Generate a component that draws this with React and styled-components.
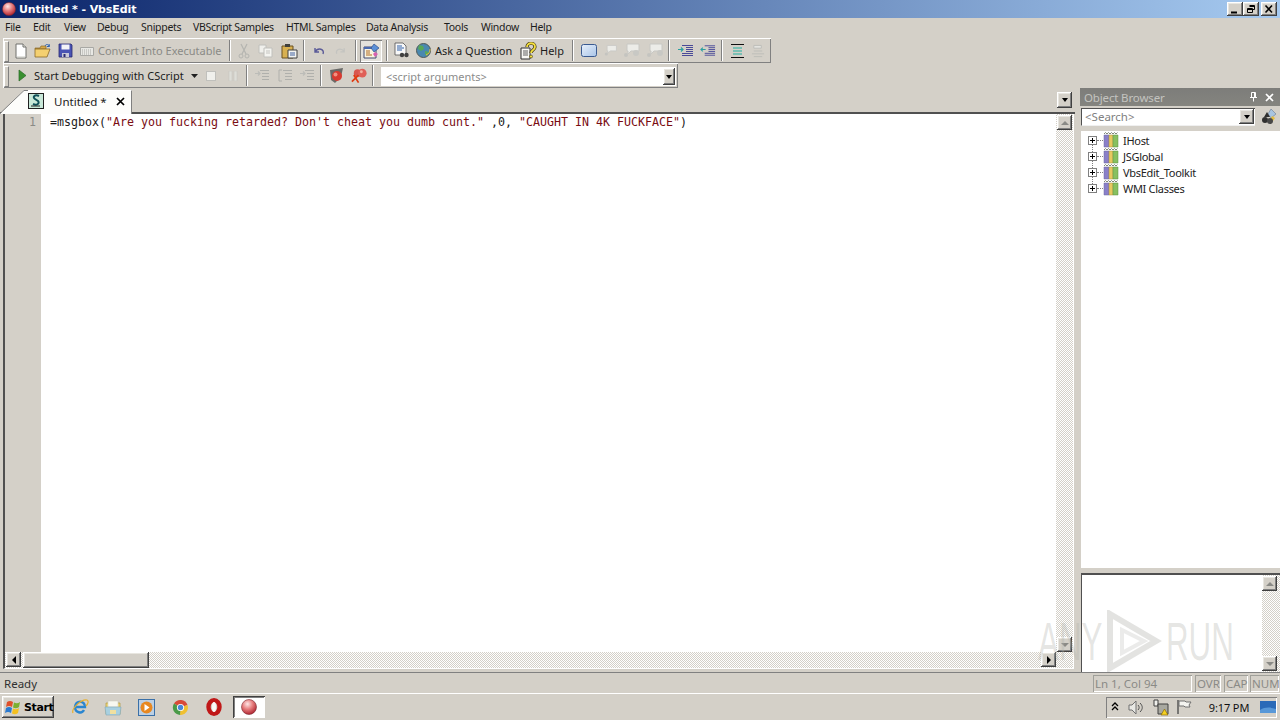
import React from 'react';
import styled, { createGlobalStyle, css } from 'styled-components';

const uiFont = `"Noto Sans", "DejaVu Sans", sans-serif`;

const GlobalStyle = createGlobalStyle`
    html, body {
        margin: 0;
        padding: 0;
        background: #d4d0c8;
    }
    * {
        box-sizing: border-box;
    }
`;

const raised = css`
    background-color: #d4d0c8;
    box-shadow: inset -1px -1px #404040, inset 1px 1px #ffffff, inset -2px -2px #808080, inset 2px 2px #e8e6e0;
`;

const checker = css`
    background: repeating-conic-gradient(#d4d0c8 0 25%, #ffffff 0 50%) 0 0 / 2px 2px;
`;

const Desktop = styled.div`
    position: relative;
    width: 1280px;
    height: 720px;
    display: flex;
    flex-direction: column;
    overflow: hidden;
    background: #d4d0c8;
    font-family: ${uiFont};
    font-size: 11px;
    color: #1c1c1c;
`;

/* title bar */
const TitleBar = styled.div`
    height: 18px;
    flex: none;
    display: flex;
    align-items: center;
    padding: 0 2px;
    background: linear-gradient(90deg, #0a246a 0%, #a6caf0 100%);
`;

const TitleText = styled.span`
    margin-left: 3px;
    font-family: "DejaVu Sans", sans-serif;
    font-weight: 700;
    font-size: 11px;
    letter-spacing: -0.1px;
    color: #ffffff;
`;

const WindowButtons = styled.div`
    margin-left: auto;
    display: flex;
    gap: 0;
    padding-right: 1px;
`;

const WindowButton = styled.div`
    ${raised}
    width: 16px;
    height: 14px;
    margin-left: ${(p) => p.$gap || 0}px;
    display: flex;
    align-items: center;
    justify-content: center;
`;

/* menu */
const MenuBar = styled.div`
    height: 20px;
    flex: none;
    display: flex;
    align-items: center;
    padding: 0 0 2px 5px;
    font-size: 10.5px;
    letter-spacing: -0.3px;
`;

const MenuItem = styled.span`
    width: ${(p) => p.$w}px;
    flex: none;
    white-space: nowrap;
`;

/* toolbars */
const Toolbar = styled.div`
    height: 25px;
    width: ${(p) => p.$w}px;
    margin-left: 3px;
    flex: none;
    display: flex;
    align-items: center;
    box-shadow: inset 1px 1px #ffffff, inset -1px -1px #808080;
`;

const Gripper = styled.div`
    width: 7px;
    height: 19px;
    flex: none;
    position: relative;
    &::before {
        content: "";
        display: block;
        width: 3px;
        height: 19px;
        margin-left: 1px;
        border-left: 1px solid #ffffff;
        border-right: 1px solid #808080;
        border-top: 1px solid #ffffff;
        border-bottom: 1px solid #808080;
    }
`;

const ToolSeparator = styled.div`
    width: 2px;
    height: 21px;
    flex: none;
    border-left: 1px solid #808080;
    border-right: 1px solid #ffffff;
`;

const Gap = styled.div`
    width: ${(p) => p.$w}px;
    flex: none;
`;

const ToolButton = styled.div`
    width: ${(p) => p.$w}px;
    height: 22px;
    flex: none;
    display: flex;
    align-items: center;
    justify-content: ${(p) => (p.$text ? 'flex-start' : 'center')};
    padding-left: ${(p) => p.$pad || 0}px;
    gap: ${(p) => p.$gapX || 0}px;
    white-space: nowrap;
    color: ${(p) => (p.$off ? '#8a8a86' : 'inherit')};
    ${(p) => p.$pressed && css`
        background: #e4e2dc;
        box-shadow: inset 1px 1px #808080, inset -1px -1px #ffffff;
    `}
`;

const ArgsCombo = styled.div`
    width: 295px;
    height: 19px;
    margin: 2px 0 0 7px;
    flex: none;
    display: flex;
    align-items: center;
    justify-content: space-between;
    padding: 0 1px 0 5px;
    background: #ffffff;
    color: #8c8c8c;
`;

const SmallDrop = styled.div`
    ${raised}
    width: ${(p) => p.$w || 12}px;
    height: ${(p) => p.$h || 16}px;
    margin-bottom: ${(p) => p.$below || 0}px;
    flex: none;
    display: flex;
    align-items: center;
    justify-content: center;
    &::after {
        content: "";
        border-left: 3px solid transparent;
        border-right: 3px solid transparent;
        border-top: 4px solid #000000;
    }
`;

/* workspace */
const Workspace = styled.div`
    flex: 1;
    min-height: 0;
    display: flex;
`;

const DocPane = styled.div`
    width: 1075px;
    flex: none;
    display: flex;
    flex-direction: column;
    padding-bottom: 3px;
`;

const TabStrip = styled.div`
    height: 26px;
    flex: none;
    display: flex;
    align-items: flex-end;
    justify-content: space-between;
    padding-right: 3px;
    box-shadow: inset 0 -2px #505050;
`;

const TabSlope = styled.svg`
    display: block;
    flex: none;
`;

const Tab = styled.div`
    height: 24px;
    width: 104px;
    flex: none;
    display: flex;
    align-items: center;
    background: #fdfdfb;
    border-top: 1px solid #ffffff;
    border-right: 1px solid #808080;
    font-size: 11.5px;
    color: #202020;
    padding-bottom: 3px;
`;

const TabLabel = styled.span`
    margin-left: 10px;
    width: 62px;
    white-space: nowrap;
`;

const TabWrap = styled.div`
    display: flex;
    align-items: flex-end;
`;

const EditorFrame = styled.div`
    flex: 1;
    min-height: 0;
    margin-left: 3px;
    margin-right: 1px;
    display: grid;
    grid-template-columns: 1fr 17px;
    grid-template-rows: 1fr 16px;
    border-left: 2px solid #505050;
    border-right: 1px solid #ffffff;
    border-bottom: 1px solid #ffffff;
    ${checker}
`;

const CodeArea = styled.div`
    display: flex;
    min-height: 0;
    background: #ffffff;
`;

const Gutter = styled.div`
    width: 36px;
    flex: none;
    padding: 1px 5px 0 0;
    text-align: right;
    background: #d4d0c8;
    font-family: "DejaVu Sans Mono", monospace;
    font-size: 11.6px;
    line-height: 14px;
    color: #8a8a86;
`;

const Code = styled.pre`
    margin: 0;
    padding: 1px 0 0 9px;
    font-family: "DejaVu Sans Mono", monospace;
    font-size: 11.63px;
    line-height: 14px;
    color: #202020;
`;

const Str = styled.span`
    color: #7a0c12;
`;

const ScrollColumn = styled.div`
    display: flex;
    flex-direction: column;
    justify-content: space-between;
    align-items: flex-start;
    padding: ${(p) => p.$padding || '1px 0 0 1px'};
    min-height: 0;
    ${checker}
`;

const HScroll = styled.div`
    display: flex;
    align-items: stretch;
    padding-left: 1px;
    ${checker}
`;

const ScrollButton = styled.div`
    ${raised}
    width: ${(p) => p.$w || 15}px;
    height: ${(p) => p.$h || 15}px;
    flex: none;
    display: flex;
    align-items: center;
    justify-content: center;
    &::after {
        content: "";
        width: 0;
        height: 0;
        ${(p) => p.$dir === 'up' && css`
            border-left: 4px solid transparent;
            border-right: 4px solid transparent;
            border-bottom: 4px solid ${p.$off ? '#8a8a86' : '#000000'};
        `}
        ${(p) => p.$dir === 'down' && css`
            border-left: 4px solid transparent;
            border-right: 4px solid transparent;
            border-top: 4px solid ${p.$off ? '#8a8a86' : '#000000'};
        `}
        ${(p) => p.$dir === 'left' && css`
            border-top: 4px solid transparent;
            border-bottom: 4px solid transparent;
            border-right: 4px solid #000000;
        `}
        ${(p) => p.$dir === 'right' && css`
            border-top: 4px solid transparent;
            border-bottom: 4px solid transparent;
            border-left: 4px solid #000000;
        `}
    }
`;

const ScrollThumb = styled.div`
    ${raised}
    width: 126px;
    margin-left: 2px;
    flex: none;
`;

const TrackFill = styled.div`
    flex: 1;
`;

/* object browser */
const BrowserPanel = styled.div`
    width: 200px;
    margin-left: 5px;
    flex: none;
    display: flex;
    flex-direction: column;
`;

const PanelHeader = styled.div`
    height: 18px;
    flex: none;
    display: flex;
    align-items: center;
    padding: 0 6px 0 4px;
    background: linear-gradient(180deg, #7d7d7a, #84847f);
    color: #c4c4c0;
    font-size: 11.5px;
    letter-spacing: -0.15px;
`;

const HeaderIcons = styled.div`
    margin-left: auto;
    display: flex;
    align-items: center;
    gap: 7px;
`;

const SearchRow = styled.div`
    height: 21px;
    flex: none;
    display: flex;
    align-items: center;
    padding-left: 1px;
`;

const SearchCombo = styled.div`
    width: 174px;
    height: 18px;
    flex: none;
    display: flex;
    align-items: center;
    justify-content: space-between;
    padding: 0 1px 0 3px;
    background: #ffffff;
    border-top: 1px solid #505050;
    border-left: 1px solid #505050;
    border-bottom: 1px solid #f0f0f0;
    color: #808080;
    font-size: 11.5px;
`;

const SearchAction = styled.div`
    margin-left: 6px;
    display: flex;
`;

const Tree = styled.div`
    flex: 1;
    min-height: 0;
    margin: 4px 0 5px 1px;
    padding-top: 1px;
    position: relative;
    background: #ffffff;
`;

const TreeRow = styled.div`
    height: 16px;
    display: flex;
    align-items: center;
    padding-left: 7px;
    color: #222222;
    white-space: nowrap;
`;

const Expander = styled.span`
    width: 9px;
    height: 9px;
    flex: none;
    position: relative;
    background: #ffffff;
    border: 1px solid #808080;
    &::before {
        content: "";
        position: absolute;
        left: 1px;
        top: 3px;
        width: 5px;
        height: 1px;
        background: #000000;
    }
    &::after {
        content: "";
        position: absolute;
        left: 3px;
        top: 1px;
        width: 1px;
        height: 5px;
        background: #000000;
    }
`;

const TreeDots = styled.span`
    width: 6px;
    flex: none;
    border-top: 1px dotted #808080;
`;

const TreeLabel = styled.span`
    margin-left: 4px;
    font-size: 11px;
    letter-spacing: -0.3px;
`;

const TreeGuide = styled.div`
    position: absolute;
    left: 11px;
    top: 9px;
    height: 48px;
    border-left: 1px dotted #808080;
`;

const DetailBox = styled.div`
    height: 99px;
    flex: none;
    margin-left: 1px;
    display: grid;
    grid-template-columns: 1fr 18px;
    background: #ffffff;
    border-top: 2px solid #505050;
    border-left: 1px solid #505050;
`;

const DetailText = styled.div`
    background: #ffffff;
`;

/* status bar */
const StatusBar = styled.div`
    height: 21px;
    flex: none;
    display: flex;
    align-items: center;
    padding: 2px 1px 0 4px;
    box-shadow: inset 0 1px #808080;
    font-size: 11.5px;
    color: #303030;
`;

const StatusSpacer = styled.div`
    flex: 1;
`;

const StatusCell = styled.div`
    width: ${(p) => p.$w}px;
    margin-left: ${(p) => p.$gap || 0}px;
    height: 17px;
    flex: none;
    display: flex;
    align-items: center;
    padding-left: 2px;
    color: #8a8a86;
    box-shadow: inset 1px 1px #a0a09a, inset -1px -1px #ffffff;
    white-space: nowrap;
    overflow: hidden;
`;

/* taskbar */
const Taskbar = styled.div`
    height: 27px;
    flex: none;
    display: flex;
    align-items: center;
    padding: 1px 3px 0 2px;
    box-shadow: inset 0 1px #ffffff;
`;

const StartButton = styled.div`
    ${raised}
    width: 52px;
    height: 22px;
    flex: none;
    display: flex;
    align-items: center;
    padding-left: 3px;
    gap: 1px;
    font-family: "DejaVu Sans", sans-serif;
    font-weight: 700;
    font-size: 11px;
    letter-spacing: -0.4px;
    color: #000000;
`;

const TaskSlot = styled.div`
    width: ${(p) => p.$w || 33.5}px;
    height: 22px;
    flex: none;
    display: flex;
    align-items: center;
    justify-content: center;
`;

const ActiveTask = styled.div`
    width: 32px;
    height: 22px;
    margin-left: 2.5px;
    flex: none;
    display: flex;
    align-items: center;
    justify-content: center;
    background: #ffffff;
    box-shadow: inset 1px 1px #404040, inset -1px -1px #ffffff, inset 2px 2px #808080;
`;

const Tray = styled.div`
    margin-left: auto;
    width: 171px;
    height: 21px;
    flex: none;
    display: flex;
    align-items: center;
    box-shadow: inset 1px 1px #808080, inset -1px -1px #ffffff;
`;

const TrayClock = styled.span`
    width: 50px;
    margin-left: 10px;
    text-align: center;
    font-size: 11px;
    letter-spacing: -0.1px;
    color: #111111;
    white-space: nowrap;
`;

/* watermark */
const Watermark = styled.div`
    position: absolute;
    left: 1038px;
    top: 610px;
    width: 190px;
    height: 62px;
    display: flex;
    align-items: center;
    justify-content: space-between;
    pointer-events: none;
    font-family: "Liberation Sans", sans-serif;
    font-size: 54px;
    color: rgba(176, 176, 170, 0.32);
`;

const MarkWord = styled.span`
    display: inline-block;
    width: 62px;
    transform: scaleX(0.58);
    transform-origin: left center;
    white-space: nowrap;
`;

/* drawings */
const Ball = ({ id, size = 14 }) => (
    <svg width={size} height={size} viewBox="0 0 16 16">
        <defs>
            <radialGradient id={id} cx="0.4" cy="0.3" r="0.75">
                <stop offset="0" stopColor="#fde6e6" />
                <stop offset="0.45" stopColor="#e88080" />
                <stop offset="1" stopColor="#a81c28" />
            </radialGradient>
        </defs>
        <circle cx="8" cy="8" r="7.5" fill={`url(#${id})`} stroke="#7a2a30" strokeWidth="0.6" />
    </svg>
);

const NewDocIcon = () => (
    <svg width="14" height="16" viewBox="0 0 14 16">
        <path d="M2 1h7l3 3v11H2z" fill="#ffffff" stroke="#70706c" />
        <path d="M9 1v3h3" fill="#e8e8e0" stroke="#70706c" />
        <path d="M3 14h8" stroke="#c8c8c0" />
    </svg>
);

const OpenIcon = () => (
    <svg width="18" height="16" viewBox="0 0 18 16">
        <path d="M1 5h5l1-2h5v3H1z" fill="#d8a848" stroke="#8a6a28" strokeWidth="0.7" />
        <path d="M1 14V6h10l5 0-3 8z" fill="#f4d070" stroke="#8a6a28" strokeWidth="0.8" />
        <path d="M11 3c1-2 3-2 4 0M15 1l.5 2.5L13 3.500" fill="none" stroke="#2a60b0" strokeWidth="1" />
    </svg>
);

const SaveIcon = () => (
    <svg width="15" height="15" viewBox="0 0 15 15">
        <path d="M1 1h12l1 1v12H1z" fill="#4a54b4" stroke="#2a2a70" strokeWidth="0.8" />
        <path d="M3.500 1.500h8v5h-8z" fill="#f4f4f8" />
        <path d="M4 10h7v4H4z" fill="#c8c8d8" />
        <path d="M5.500 11h2v3h-2z" fill="#2a2a70" />
    </svg>
);

const KeyboardIcon = () => (
    <svg width="14" height="12" viewBox="0 0 14 12">
        <path d="M.5 2.500h13v8H.5z" fill="#e8e8e4" stroke="#a8a8a4" />
        <path d="M2 5h10M2 7h10M2 9h10" stroke="#a8a8a4" strokeDasharray="1 1" />
    </svg>
);

const CutIcon = () => (
    <svg width="12" height="16" viewBox="0 0 12 16">
        <path d="M3 1l5 10M9 1L4 11" stroke="#b4b4b0" strokeWidth="1.2" fill="none" />
        <circle cx="3" cy="13" r="2" fill="none" stroke="#b4b4b0" />
        <circle cx="9" cy="13" r="2" fill="none" stroke="#b4b4b0" />
    </svg>
);

const CopyIcon = () => (
    <svg width="16" height="14" viewBox="0 0 16 14">
        <path d="M1 1h7v8H1z" fill="#f0f0ec" stroke="#c0c0bc" />
        <path d="M6 4h8v9H6z" fill="#f4f4f0" stroke="#c0c0bc" />
        <path d="M8 7h4M8 9h4" stroke="#c4c4c0" />
    </svg>
);

const PasteIcon = () => (
    <svg width="17" height="16" viewBox="0 0 17 16">
        <path d="M1 3h11v12H1z" fill="#d8b050" stroke="#6a5020" />
        <path d="M4 1h5v3H4z" fill="#40403c" />
        <path d="M7 7h9v8H7z" fill="#f4f4f0" stroke="#404040" />
        <path d="M9 10h5M9 12h5" stroke="#4060a0" />
    </svg>
);

const UndoIcon = ({ off }) => (
    <svg width="15" height="12" viewBox="0 0 15 12">
        <path
            d={off ? 'M4 9c-2-5 5-7 8-2M12 3v4H8' : 'M11 9c2-5-5-7-8-2M3 3v4h4'}
            fill="none"
            stroke={off ? '#c4c4c0' : '#5a5a98'}
            strokeWidth="1.4"
        />
    </svg>
);

const ToggleIcon = () => (
    <svg width="17" height="16" viewBox="0 0 17 16">
        <path d="M1 4h12v11H1z" fill="#f8f4e0" stroke="#404870" />
        <path d="M1 4h12v2H1z" fill="#4a6ab0" />
        <path d="M3 8h4M3 10h4M3 12h6" stroke="#b06a20" />
        <path d="M11 1l5 4-5 4-3-4z" fill="#5a90d8" stroke="#30508a" strokeWidth="0.7" />
        <path d="M12 9l3 2-3 3-2-3z" fill="#d860b0" />
    </svg>
);

const FindDocIcon = () => (
    <svg width="17" height="17" viewBox="0 0 17 17">
        <path d="M2 1h8l3 3v9H2z" fill="#f8f8f8" stroke="#505050" strokeWidth="0.8" />
        <path d="M4 4h5M4 6h7M4 8h5" stroke="#3060a8" />
        <circle cx="9" cy="13" r="2.200" fill="#404040" />
        <circle cx="13.500" cy="13" r="2.200" fill="#404040" />
    </svg>
);

const GlobeIcon = () => (
    <svg width="17" height="17" viewBox="0 0 17 17">
        <circle cx="8.500" cy="8.500" r="7" fill="#4a88b0" stroke="#505858" />
        <path d="M4 3l4 1 1 3-3 2-3-2zM10 9l4 1-2 4-2-2z" fill="#58a858" />
        <path d="M11 13a6 6 0 0 0 4-6" stroke="#e8c040" fill="none" />
    </svg>
);

const HelpIcon = () => (
    <svg width="17" height="18" viewBox="0 0 17 18">
        <path d="M1 6h9v11H1z" fill="#f8f8f4" stroke="#303030" />
        <path d="M3 9h5M3 11h5M3 13h5" stroke="#606060" />
        <path d="M7 5c0-5 8-5 8 0 0 3-4 3-4 6" fill="none" stroke="#3a3010" strokeWidth="3.200" />
        <path d="M7 5c0-5 8-5 8 0 0 3-4 3-4 6" fill="none" stroke="#f4e040" strokeWidth="1.800" />
        <circle cx="11" cy="14.500" r="1.500" fill="#f4e040" stroke="#3a3010" strokeWidth="0.6" />
    </svg>
);

const RectIcon = () => (
    <svg width="16" height="13" viewBox="0 0 16 13">
        <defs>
            <linearGradient id="rectFill" x1="0" y1="0" x2="1" y2="1">
                <stop offset="0" stopColor="#e8f0fa" />
                <stop offset="1" stopColor="#a8c4e8" />
            </linearGradient>
        </defs>
        <rect x="0.500" y="0.500" width="15" height="12" rx="2" fill="url(#rectFill)" stroke="#3a5a90" />
    </svg>
);

const BubbleIcon = ({ variant }) => (
    <svg width="18" height="15" viewBox="0 0 18 15">
        <path d="M4 1h12v7H8l-3 3V8H4z" fill="#ececE8" stroke="#c8c8c4" />
        {variant > 0 && <circle cx={variant === 1 ? 13 : 14} cy="10" r="3" fill="#c8c8c4" />}
        <circle cx="3" cy="12" r="2" fill="#c4c4c0" />
    </svg>
);

const IndentIcon = ({ flip }) => (
    <svg width="17" height="13" viewBox="0 0 17 13">
        <path d="M5 1.500h11M9 3.500h7M9 5.500h7M9 7.500h7M5 9.500h11M5 11.500h11" stroke="#4a4a98" />
        <path d={flip ? 'M6 5.500H1M3 3.500l-2 2 2 2' : 'M1 5.500h5M4 3.500l2 2-2 2'} fill="none" stroke="#2aa0a0" strokeWidth="1.200" />
    </svg>
);

const LinesIcon = ({ off }) => (
    <svg width="15" height="16" viewBox="0 0 15 16">
        {off ? (
            <path d="M3 2h8v3H3zM3 8h9M1 11h13M3 14h9" fill="#e4e4e0" stroke="#bcbcb8" />
        ) : (
            <>
                <path d="M1 1.500h13M1 14.500h13" stroke="#101010" />
                <path d="M3 5h9M3 8h9M3 11h9" stroke="#20b0a0" />
            </>
        )}
    </svg>
);

const PlayIcon = () => (
    <svg width="9" height="13" viewBox="0 0 9 13">
        <path d="M1 1l7 5.500L1 12z" fill="#3a9030" stroke="#2a6a28" strokeWidth="0.7" />
    </svg>
);

const StopIcon = () => (
    <svg width="10" height="10" viewBox="0 0 10 10">
        <rect x="0.500" y="0.500" width="9" height="9" fill="#f0f0ec" stroke="#c0c0bc" />
    </svg>
);

const PauseIcon = () => (
    <svg width="10" height="10" viewBox="0 0 10 10">
        <path d="M1 0h3v10H1zM6 0h3v10H6z" fill="#deded8" stroke="#c0c0bc" strokeWidth="0.500" />
    </svg>
);

const StepIcon = ({ mode }) => (
    <svg width="17" height="15" viewBox="0 0 17 15">
        <path d="M6 2.500h9M8 5.500h7M8 8.500h7M8 11.500h7" stroke="#b0b0ac" />
        {mode === 1 && <path d="M5 2H2v11h3" fill="none" stroke="#b0b0ac" />}
        {mode !== 1 && <path d="M1 5.500h5M4 3.500l2 2-2 2" fill="none" stroke="#bcbcb8" strokeWidth="1.200" />}
    </svg>
);

const BreakpointIcon = () => (
    <svg width="17" height="17" viewBox="0 0 17 17">
        <path d="M2 3l13-2-2 9-6 6-4-3z" fill="#6a6a68" />
        <circle cx="9" cy="9" r="5" fill="#d83a30" />
        <circle cx="7.500" cy="7.500" r="2" fill="#f09080" />
    </svg>
);

const ClearBreakIcon = () => (
    <svg width="19" height="17" viewBox="0 0 19 17">
        <circle cx="8" cy="6" r="4" fill="#d85850" />
        <circle cx="13" cy="6" r="4.500" fill="#e06058" />
        <circle cx="12" cy="4.500" r="1.500" fill="#f4b0a0" />
        <path d="M2 15l7-7M4 8l5 8" stroke="#e03a10" strokeWidth="1.800" />
    </svg>
);

const BinocularIcon = () => (
    <svg width="16" height="17" viewBox="0 0 16 17">
        <path d="M10 1l5 5-5 4-3-4z" fill="#a8c4e0" stroke="#6a7a90" strokeWidth="0.6" />
        <path d="M11 8l3 2-2 3-2-3z" fill="#e8c040" />
        <circle cx="4" cy="12" r="3" fill="#303030" />
        <circle cx="9" cy="13" r="3" fill="#484848" />
        <path d="M3 9l3-5 3 5z" fill="#303030" />
    </svg>
);

const ScriptTabIcon = () => (
    <svg width="16" height="16" viewBox="0 0 16 16">
        <rect x="0.500" y="0.500" width="15" height="15" fill="#c8e8d8" stroke="#202020" />
        <path d="M11 3c-4-2-7 1-4 3l3 2c2 2-1 5-5 3" fill="none" stroke="#105058" strokeWidth="2" />
        <path d="M3 13h9" stroke="#202020" />
    </svg>
);

const BooksIcon = () => (
    <svg width="16" height="16" viewBox="0 0 16 16">
        <path d="M1 3h5v12H1z" fill="#8a80c8" stroke="#6a68a0" strokeWidth="0.5" />
        <path d="M6 3h4v12H6z" fill="#e8c860" stroke="#a89040" strokeWidth="0.5" />
        <path d="M10 3h5v12h-5z" fill="#88c060" stroke="#5a9040" strokeWidth="0.5" />
        <path d="M1 2l1.500-1.500L4 2l1.500-1.500L7 2l1.500-1.500L10 2l1.500-1.500L13 2l1.500-1.500" fill="none" stroke="#808878" />
    </svg>
);

const WinGlyph = ({ kind }) => (
    <svg width="10" height="10" viewBox="0 0 10 10">
        {kind === 'min' && <path d="M1 7.500h6v2H1z" fill="#000000" />}
        {kind === 'restore' && <path d="M3.500 1.500h5v4h-2M1.500 4.500h5v4h-5zM1.500 5.500h5M3.500 2.500h5" fill="none" stroke="#000000" />}
        {kind === 'close' && <path d="M1.500 1.500l6.500 7M8 1.500l-6.500 7" stroke="#000000" strokeWidth="1.600" />}
    </svg>
);

const CloseGlyph = ({ color = '#000000' }) => (
    <svg width="9" height="9" viewBox="0 0 9 9">
        <path d="M1 1l7 7M8 1L1 8" stroke={color} strokeWidth="1.700" />
    </svg>
);

const PinGlyph = () => (
    <svg width="9" height="10" viewBox="0 0 9 10">
        <path d="M2.500 .5h4v5h-4zM1 5.500h7M4.500 5.500v4M5.500 1v4" fill="none" stroke="#ffffff" />
    </svg>
);

const WindowsFlag = () => (
    <svg width="18" height="16" viewBox="0 0 18 16">
        <path d="M2 3c2-1.500 4-1.500 6 0l-1 5c-2-1.500-4-1.500-6 0z" fill="#e0502a" />
        <path d="M9 3.500c2 1 4 1 6-.5l-1 5c-2 1.500-4 1.500-6 .5z" fill="#7cb030" />
        <path d="M1 9c2-1.500 4-1.500 6 0l-1 5c-2-1.500-4-1.500-6 0z" fill="#2a7ad0" />
        <path d="M8 9.500c2 1 4 1 6-.5l-1 5c-2 1.500-4 1.500-6 .5z" fill="#f4c020" />
    </svg>
);

const IeIcon = () => (
    <svg width="18" height="18" viewBox="0 0 18 18">
        <path d="M4 9h10c0-7-9-7-10 0 0 6 7 7 9 3" fill="none" stroke="#2a86d0" strokeWidth="2.400" />
        <path d="M2 15C0 11 10 1 16 2c2 1 1 4-1 6" fill="none" stroke="#e8b030" strokeWidth="1.200" />
    </svg>
);

const FolderIcon = () => (
    <svg width="18" height="17" viewBox="0 0 18 17">
        <path d="M2 4h14v11H2z" fill="#f0d878" stroke="#b09840" strokeWidth="0.7" />
        <path d="M4 2h10v6H4z" fill="#f8f8f0" stroke="#c8c8b8" strokeWidth="0.5" />
        <path d="M1 8h16l-1 8H2z" fill="#a8d0e0" stroke="#80a8b8" strokeWidth="0.6" />
        <path d="M6 11h6v4H6z" fill="#f0e0a0" />
    </svg>
);

const MediaIcon = () => (
    <svg width="17" height="17" viewBox="0 0 17 17">
        <rect x="0.500" y="0.500" width="16" height="16" fill="#bcd0e4" stroke="#3a70a8" />
        <circle cx="8.500" cy="8.500" r="6" fill="#e88820" />
        <path d="M6.500 5l5 3.500-5 3.500z" fill="#ffffff" />
    </svg>
);

const ChromeIcon = () => (
    <svg width="17" height="17" viewBox="0 0 17 17">
        <path d="M8.500 8.500L2 4.500A7.500 7.500 0 0 1 15.500 6z" fill="#d84a38" />
        <path d="M8.500 8.500L15.500 6A7.500 7.500 0 0 1 8 16z" fill="#f0c030" />
        <path d="M8.500 8.500L8 16A7.500 7.500 0 0 1 2 4.500z" fill="#4a9a48" />
        <circle cx="8.500" cy="8.500" r="3.600" fill="#ffffff" />
        <circle cx="8.500" cy="8.500" r="2.700" fill="#4a88d8" />
    </svg>
);

const OperaIcon = () => (
    <svg width="16" height="18" viewBox="0 0 16 18">
        <ellipse cx="8" cy="9" rx="5.500" ry="6.800" fill="none" stroke="#c01818" strokeWidth="4.400" />
        <ellipse cx="8" cy="9" rx="2" ry="5" fill="#fbfbf8" />
    </svg>
);

const TrayChevron = () => (
    <svg width="8" height="10" viewBox="0 0 8 10">
        <path d="M1 4l3-3 3 3M1 8l3-3 3 3" fill="none" stroke="#000000" strokeWidth="1.300" />
    </svg>
);

const SpeakerIcon = () => (
    <svg width="17" height="15" viewBox="0 0 17 15">
        <path d="M1 5h3l4-4v13l-4-4H1z" fill="#e8e8e4" stroke="#707070" />
        <path d="M10 5c1.500 1.500 1.500 3.500 0 5M12 3c3 3 3 6 0 9" fill="none" stroke="#505050" />
    </svg>
);

const NetworkIcon = () => (
    <svg width="17" height="17" viewBox="0 0 17 17">
        <path d="M1 1h4v6H1z" fill="#f0f0ec" stroke="#404040" />
        <path d="M5 5h10v10H5z" fill="#a8a8a0" stroke="#404040" />
        <path d="M8 16l3.500-6 3.500 6z" fill="#f4d020" stroke="#806000" strokeWidth="0.6" />
    </svg>
);

const FlagIcon = () => (
    <svg width="16" height="16" viewBox="0 0 16 16">
        <path d="M2 1v14" stroke="#505050" strokeWidth="1.400" />
        <path d="M3 2h6l1 1h5l-2 3 1 2H9L8 7H3z" fill="#f4f4f0" stroke="#707070" />
    </svg>
);

const ShowDesktopIcon = () => (
    <svg width="16" height="12" viewBox="0 0 16 12">
        <rect width="16" height="12" fill="#2a6ab8" />
        <path d="M0 9c5-3 10-3 16-1v4H0z" fill="#5898d8" />
    </svg>
);

const SmallArrow = () => (
    <svg width="7" height="4" viewBox="0 0 7 4">
        <path d="M0 0h7L3.500 4z" fill="#202020" />
    </svg>
);

const menuItems = [
    ['File', 28], ['Edit', 31], ['View', 33], ['Debug', 44], ['Snippets', 52], ['VBScript Samples', 93],
    ['HTML Samples', 80], ['Data Analysis', 78], ['Tools', 37], ['Window', 49], ['Help', 30],
];

const treeItems = ['IHost', 'JSGlobal', 'VbsEdit_Toolkit', 'WMI Classes'];

const VScroll = ({ padding }) => (
    <ScrollColumn $padding={padding}>
        <ScrollButton $dir="up" $off />
        <ScrollButton $dir="down" $off />
    </ScrollColumn>
);

export default function App() {
    return (
        <Desktop>
            <GlobalStyle />
            <TitleBar>
                <Ball id="titleBall" />
                <TitleText>Untitled * - VbsEdit</TitleText>
                <WindowButtons>
                    <WindowButton><WinGlyph kind="min" /></WindowButton>
                    <WindowButton><WinGlyph kind="restore" /></WindowButton>
                    <WindowButton $gap={2}><WinGlyph kind="close" /></WindowButton>
                </WindowButtons>
            </TitleBar>

            <MenuBar>
                {menuItems.map(([label, w]) => (
                    <MenuItem key={label} $w={w}>{label}</MenuItem>
                ))}
            </MenuBar>

            <Toolbar $w={768}>
                <Gripper />
                <ToolButton $w={22}><NewDocIcon /></ToolButton>
                <ToolButton $w={22}><OpenIcon /></ToolButton>
                <ToolButton $w={22}><SaveIcon /></ToolButton>
                <ToolButton $w={153} $text $off $pad={4} $gapX={4}><KeyboardIcon />Convert Into Executable</ToolButton>
                <ToolSeparator />
                <ToolButton $w={26}><CutIcon /></ToolButton>
                <ToolButton $w={18}><CopyIcon /></ToolButton>
                <ToolButton $w={28}><PasteIcon /></ToolButton>
                <ToolSeparator />
                <ToolButton $w={28}><UndoIcon /></ToolButton>
                <ToolButton $w={14}><UndoIcon off /></ToolButton>
                <Gap $w={8} />
                <ToolSeparator />
                <Gap $w={3} />
                <ToolButton $w={22} $pressed><ToggleIcon /></ToolButton>
                <Gap $w={4} />
                <ToolSeparator />
                <ToolButton $w={26}><FindDocIcon /></ToolButton>
                <ToolButton $w={102} $text $pad={1} $gapX={3}><GlobeIcon />Ask a Question</ToolButton>
                <ToolButton $w={56} $text $pad={4} $gapX={3}><HelpIcon />Help</ToolButton>
                <ToolSeparator />
                <ToolButton $w={30}><RectIcon /></ToolButton>
                <ToolButton $w={14}><BubbleIcon variant={0} /></ToolButton>
                <ToolButton $w={28}><BubbleIcon variant={1} /></ToolButton>
                <ToolButton $w={18}><BubbleIcon variant={2} /></ToolButton>
                <Gap $w={4} />
                <ToolSeparator />
                <ToolButton $w={30}><IndentIcon /></ToolButton>
                <ToolButton $w={16}><IndentIcon flip /></ToolButton>
                <Gap $w={5} />
                <ToolSeparator />
                <ToolButton $w={28}><LinesIcon /></ToolButton>
                <ToolButton $w={14}><LinesIcon off /></ToolButton>
            </Toolbar>

            <Toolbar $w={675}>
                <Gripper />
                <ToolButton $w={24}><PlayIcon /></ToolButton>
                <ToolButton $w={155} $text>Start Debugging with CScript</ToolButton>
                <ToolButton $w={11}><SmallArrow /></ToolButton>
                <ToolButton $w={22}><StopIcon /></ToolButton>
                <ToolButton $w={22}><PauseIcon /></ToolButton>
                <Gap $w={2} />
                <ToolSeparator />
                <ToolButton $w={28}><StepIcon mode={0} /></ToolButton>
                <ToolButton $w={18}><StepIcon mode={1} /></ToolButton>
                <ToolButton $w={26}><StepIcon mode={2} /></ToolButton>
                <ToolSeparator />
                <ToolButton $w={28}><BreakpointIcon /></ToolButton>
                <ToolButton $w={18}><ClearBreakIcon /></ToolButton>
                <Gap $w={4} />
                <ToolSeparator />
                <ArgsCombo>
                    &lt;script arguments&gt;
                    <SmallDrop $w={12} $h={17} />
                </ArgsCombo>
            </Toolbar>

            <Workspace>
                <DocPane>
                    <TabStrip>
                        <TabWrap>
                            <TabSlope width="28" height="24" viewBox="0 0 28 24">
                                <path d="M0 24L24 0h4v24z" fill="#fdfdfb" />
                                <path d="M0 23.500L24 .5h4" fill="none" stroke="#808080" />
                            </TabSlope>
                            <Tab>
                                <ScriptTabIcon />
                                <TabLabel>Untitled *</TabLabel>
                                <CloseGlyph />
                            </Tab>
                        </TabWrap>
                        <SmallDrop $w={15} $h={16} $below={6} />
                    </TabStrip>
                    <EditorFrame>
                        <CodeArea>
                            <Gutter>1</Gutter>
                            <Code>
                                =msgbox(<Str>"Are you fucking retarded? Don't cheat you dumb cunt."</Str> ,0, <Str>"CAUGHT IN 4K FUCKFACE"</Str>)
                            </Code>
                        </CodeArea>
                        <VScroll />
                        <HScroll>
                            <ScrollButton $dir="left" />
                            <ScrollThumb />
                            <TrackFill />
                            <ScrollButton $dir="right" />
                        </HScroll>
                        <TrackFill />
                    </EditorFrame>
                </DocPane>

                <BrowserPanel>
                    <PanelHeader>
                        Object Browser
                        <HeaderIcons>
                            <PinGlyph />
                            <CloseGlyph color="#ffffff" />
                        </HeaderIcons>
                    </PanelHeader>
                    <SearchRow>
                        <SearchCombo>
                            &lt;Search&gt;
                            <SmallDrop $w={15} $h={15} />
                        </SearchCombo>
                        <SearchAction><BinocularIcon /></SearchAction>
                    </SearchRow>
                    <Tree>
                        <TreeGuide />
                        {treeItems.map((name) => (
                            <TreeRow key={name}>
                                <Expander />
                                <TreeDots />
                                <BooksIcon />
                                <TreeLabel>{name}</TreeLabel>
                            </TreeRow>
                        ))}
                    </Tree>
                    <DetailBox>
                        <DetailText />
                        <VScroll padding="1px 2px 1px 0" />
                    </DetailBox>
                </BrowserPanel>
            </Workspace>

            <StatusBar>
                Ready
                <StatusSpacer />
                <StatusCell $w={99}>Ln 1, Col 94</StatusCell>
                <StatusCell $w={26} $gap={3}>OVR</StatusCell>
                <StatusCell $w={24} $gap={3}>CAP</StatusCell>
                <StatusCell $w={29} $gap={2}>NUM</StatusCell>
            </StatusBar>

            <Taskbar>
                <StartButton><WindowsFlag />Start</StartButton>
                <Gap $w={9} />
                <TaskSlot><IeIcon /></TaskSlot>
                <TaskSlot><FolderIcon /></TaskSlot>
                <TaskSlot><MediaIcon /></TaskSlot>
                <TaskSlot><ChromeIcon /></TaskSlot>
                <TaskSlot><OperaIcon /></TaskSlot>
                <ActiveTask><Ball id="taskBall" size={16} /></ActiveTask>
                <Tray>
                    <TaskSlot $w={18}><TrayChevron /></TaskSlot>
                    <TaskSlot $w={24}><SpeakerIcon /></TaskSlot>
                    <TaskSlot $w={26}><NetworkIcon /></TaskSlot>
                    <TaskSlot $w={20}><FlagIcon /></TaskSlot>
                    <TrayClock>9:17 PM</TrayClock>
                    <Gap $w={6} />
                    <ShowDesktopIcon />
                </Tray>
            </Taskbar>

            <Watermark>
                <MarkWord>ANY</MarkWord>
                <svg width="58" height="62" viewBox="0 0 58 62">
                    <path d="M6 4l46 27L6 58z" fill="none" stroke="rgba(176,176,170,0.35)" strokeWidth="6" />
                    <path d="M18 20l22 11-22 12z" fill="none" stroke="rgba(176,176,170,0.25)" strokeWidth="4" />
                </svg>
                <MarkWord>RUN</MarkWord>
            </Watermark>
        </Desktop>
    );
}
